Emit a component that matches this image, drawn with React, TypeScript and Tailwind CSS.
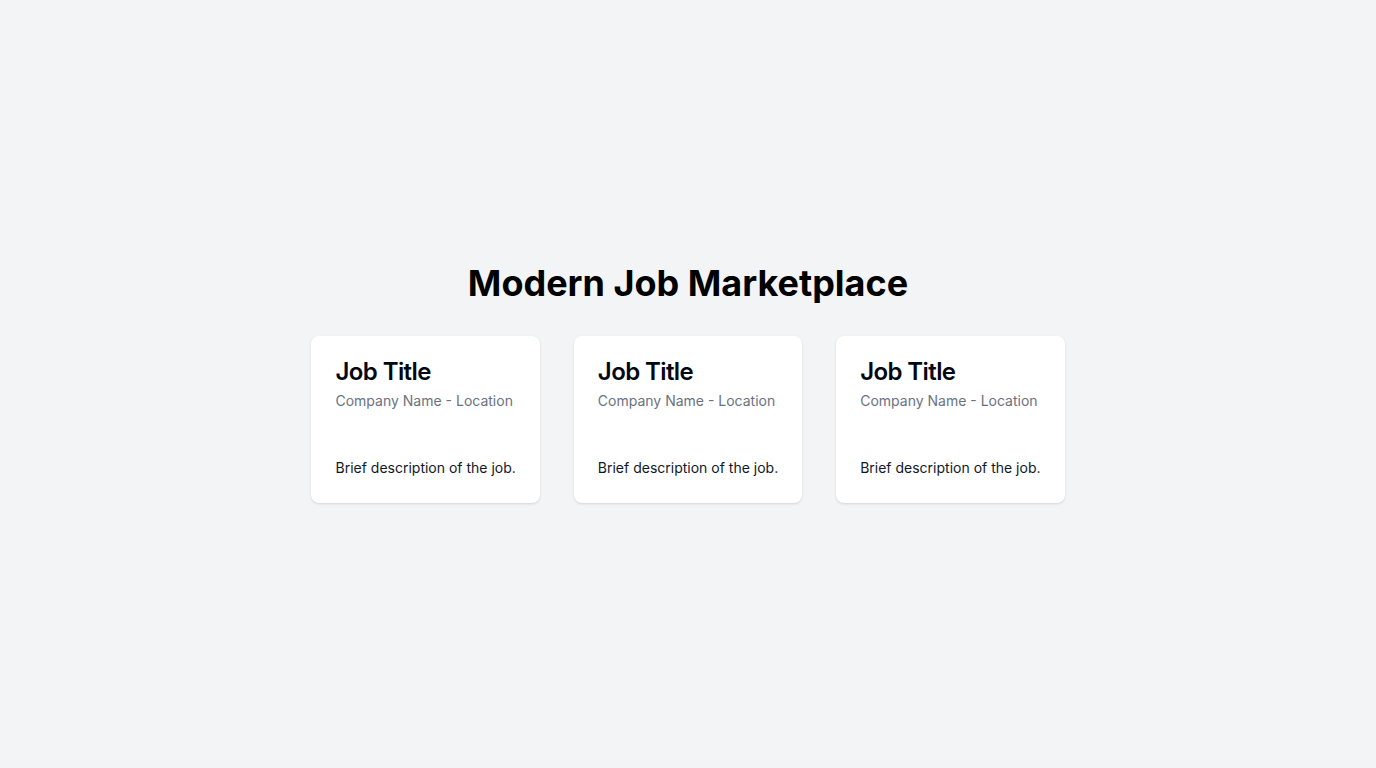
const jobs = [1, 2, 3];

const JobCard = () => (
  <div className="bg-white rounded-lg shadow-sm px-6 pt-5 pb-[25px]">
    <h2 className="text-2xl leading-8 font-semibold tracking-tight text-gray-950">Job Title</h2>
    <p className="mt-[3px] text-sm leading-5 text-gray-500">Company Name - Location</p>
    <p className="mt-[47px] text-sm leading-5 text-gray-900">Brief description of the job.</p>
  </div>
);

const App = () => {
  return (
    <div
      className="min-h-screen bg-gray-100 flex flex-col items-center justify-center pb-[2px]"
      style={{ fontFamily: "Inter, 'Noto Sans', sans-serif" }}
    >
      <h1 className="text-4xl leading-10 font-bold text-black mb-[33px]">Modern Job Marketplace</h1>
      <div className="flex gap-[34px]">
        {jobs.map((id) => (
          <JobCard key={id} />
        ))}
      </div>
    </div>
  );
};

export default App;
